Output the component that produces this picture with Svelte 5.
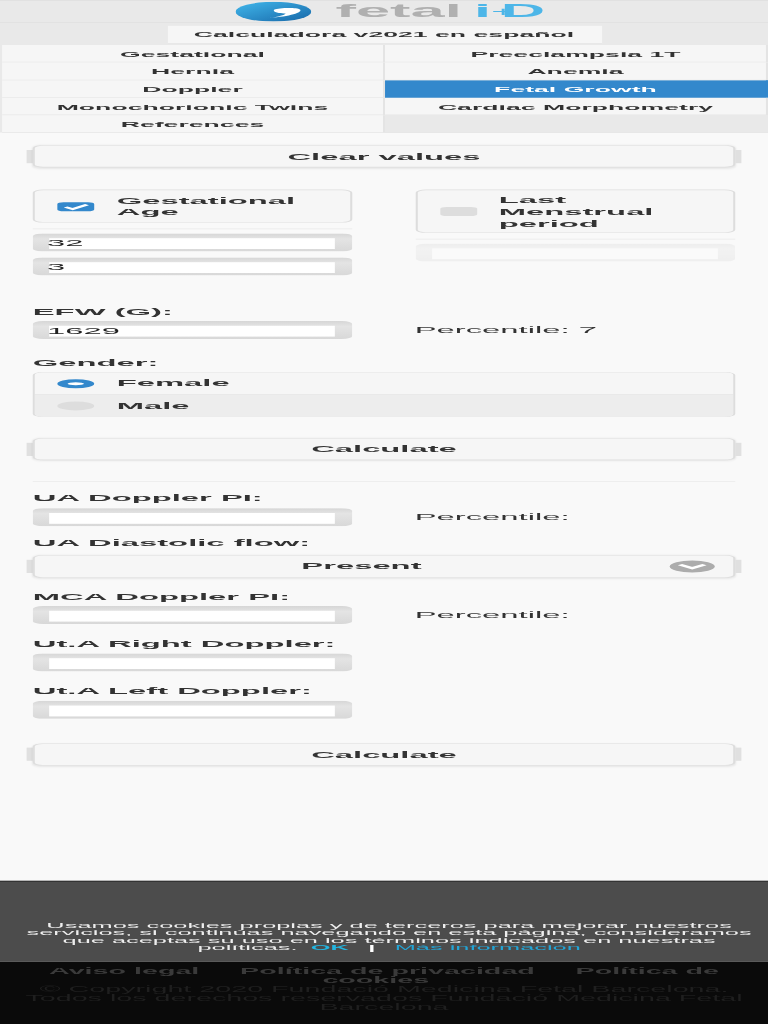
<script>
  // Tabs of the calculator
  const tabs = [
    { label: 'Gestational' },
    { label: 'Preeclampsia 1T' },
    { label: 'Hernia' },
    { label: 'Anemia' },
    { label: 'Doppler' },
    { label: 'Fetal Growth', active: true },
    { label: 'Monochorionic Twins' },
    { label: 'Cardiac Morphometry' },
    { label: 'References' },
    { label: '', empty: true },
  ]
</script>

<div class="viewport">
  <div class="page">
    <header class="header">
      <svg class="logo-mark" viewBox="0 0 37 33" aria-hidden="true">
        <defs>
          <linearGradient id="logoBlue" x1="0" y1="0" x2="1" y2="1">
            <stop offset="0" stop-color="#41b8ec" />
            <stop offset="1" stop-color="#1767a8" />
          </linearGradient>
        </defs>
        <ellipse cx="18.5" cy="16.5" rx="18.5" ry="16.5" fill="url(#logoBlue)" />
        <path d="M19 13c2-3 11-4 12.500 0 1.500 5-5 11.500-15 14 4.500-2 7.500-5 8-7.500-3 .5-7-2.500-5.500-6.500z" fill="#fff" />
      </svg>
      <div class="logo-text">
        <span class="logo-fetal">fetal</span>
        <span class="logo-id">i<span class="logo-plus">+</span>D</span>
      </div>
    </header>

    <div class="subtitle-bar">
      <div class="subtitle">Calculadora v2021 en español</div>
    </div>

    <nav class="tabs">
      {#each tabs as tab}
        <div class="tab" class:active={tab.active} class:empty={tab.empty}>{tab.label}</div>
      {/each}
    </nav>

    <main class="content">
      <div class="btn-wrap first">
        <div class="btn">Clear values</div>
      </div>

      <div class="two-col dates">
        <div>
          <div class="choice short">
            <span class="check on">
              <svg viewBox="0 0 18 15" aria-hidden="true"><path d="M4 8l3.500 3.500L14.500 4" fill="none" stroke="#fff" stroke-width="2.600" /></svg>
            </span>
            <span class="choice-text">Gestational Age</span>
          </div>
          <hr class="line" />
          <input class="input" value="32" />
          <input class="input next" value="3" />
        </div>
        <div>
          <div class="choice">
            <span class="check"></span>
            <span class="choice-text">Last Menstrual period</span>
          </div>
          <hr class="line" />
          <input class="input disabled" disabled />
        </div>
      </div>

      <div class="label efw">EFW (G):</div>
      <div class="two-col">
        <input class="input" value="1629" />
        <div class="percentile">Percentile: 7</div>
      </div>

      <div class="label gender">Gender:</div>
      <div class="radio-group">
        <div class="radio-row">
          <span class="radio on"></span>
          <span>Female</span>
        </div>
        <div class="radio-row off">
          <span class="radio"></span>
          <span>Male</span>
        </div>
      </div>

      <div class="btn-wrap calc">
        <div class="btn">Calculate</div>
      </div>

      <hr class="line wide" />

      <div class="label ua">UA Doppler PI:</div>
      <div class="two-col">
        <input class="input" />
        <div class="percentile">Percentile:</div>
      </div>

      <div class="label diastolic">UA Diastolic flow:</div>
      <div class="btn-wrap">
        <div class="btn select">
          <span class="select-text">Present</span>
          <span class="arrow">
            <svg viewBox="0 0 22 20" aria-hidden="true"><path d="M5 7l6 6 6-6" fill="none" stroke="#fff" stroke-width="3" /></svg>
          </span>
        </div>
      </div>

      <div class="label mca">MCA Doppler PI:</div>
      <div class="two-col">
        <input class="input" />
        <div class="percentile">Percentile:</div>
      </div>

      <div class="label uta">Ut.A Right Doppler:</div>
      <div class="two-col">
        <input class="input" />
      </div>

      <div class="label uta">Ut.A Left Doppler:</div>
      <div class="two-col">
        <input class="input" />
      </div>

      <div class="btn-wrap calc-last">
        <div class="btn">Calculate</div>
      </div>
    </main>

    <section class="cookies">
      Usamos cookies propias y de terceros para mejorar nuestros servicios, si continúas navegando en esta página, consideramos que aceptas su uso en los términos indicados en nuestras políticas.
      <b class="ok">OK</b> <span class="sep">|</span> <span class="more">Más información</span>
    </section>

    <footer class="footer">
      <div class="legal">
        <span>Aviso legal</span>
        <span>Política de privacidad</span>
        <span>Política de cookies</span>
      </div>
      <div class="copy">© Copyright 2020 Fundació Medicina Fetal Barcelona. Todos los derechos reservados Fundació Medicina Fetal Barcelona</div>
    </footer>
  </div>
</div>

<style>
  :global(body) {
    margin: 0;
    background: #f9f9f9;
  }

  /* The capture is a tall phone page squeezed into the window */
  .viewport {
    width: 768px;
    height: 1024px;
    overflow: hidden;
  }
  .page {
    display: flex;
    flex-direction: column;
    width: 375px;
    height: 1706.67px;
    transform: scale(2.048, 0.6);
    transform-origin: 0 0;
    font-family: "Liberation Sans", Arial, sans-serif;
    font-size: 16px;
    color: #333;
    background: #f9f9f9;
    filter: blur(0.3px);
  }

  /* Header */
  .header {
    display: flex;
    align-items: center;
    justify-content: center;
    gap: 12px;
    flex: none;
    height: 37px;
    padding-left: 6px;
    box-sizing: border-box;
    background: #e9e9e9;
    border-top: 1px solid #ddd;
  }
  .logo-mark {
    width: 37px;
    height: 33px;
  }
  .logo-text {
    display: flex;
    gap: 6px;
    font-size: 30px;
    line-height: 33px;
    font-weight: bold;
  }
  .logo-fetal {
    color: #b0b0b0;
  }
  .logo-id {
    color: #4db6e8;
  }
  .logo-plus {
    margin: 0 -7px 0 0;
    font-size: 20px;
    font-weight: normal;
    vertical-align: 3px;
  }
  .subtitle-bar {
    display: flex;
    justify-content: center;
    flex: none;
    height: 38px;
    padding-top: 5px;
    box-sizing: border-box;
    background: #e9e9e9;
    border-top: 1px solid #ddd;
  }
  .subtitle {
    width: 212px;
    height: 30px;
    line-height: 30px;
    text-align: center;
    font-size: 13px;
    font-weight: bold;
    background: #f6f6f6;
    border-bottom: 1px solid #e2e2e2;
    box-sizing: border-box;
  }

  /* Tabs */
  .tabs {
    display: grid;
    grid-template-columns: 1fr 1fr;
    grid-auto-rows: 29.300px;
    flex: none;
    padding-left: 1px;
    background: #e9e9e9;
    box-sizing: border-box;
  }
  .tab {
    line-height: 31px;
    text-align: center;
    font-size: 13px;
    font-weight: bold;
    background: #f6f6f6;
    border-right: 1px solid #e4e4e4;
    border-bottom: 1px solid #e4e4e4;
    box-sizing: border-box;
  }
  .tab.active {
    color: #fff;
    background: #3388cc;
    border-color: #3388cc;
  }
  .tab.empty {
    background: #e9e9e9;
    border-right: 0;
  }

  /* Form */
  .content {
    flex: 1;
    padding: 0 16px;
  }
  .two-col {
    display: grid;
    grid-template-columns: 156px 156px;
    column-gap: 30.500px;
    align-items: start;
  }
  .label {
    font-weight: bold;
    line-height: 19px;
    margin-bottom: 6px;
  }
  .label.efw { margin-top: 51px; }
  .label.gender { margin-top: 30px; }
  .label.ua { margin-top: 17px; margin-bottom: 8px; }
  .label.diastolic { margin-top: 18px; margin-bottom: 11px; }
  .label.mca { margin-top: 22px; }
  .label.uta { margin-top: 23px; margin-bottom: 7px; }

  .btn-wrap {
    display: flex;
    align-items: center;
    margin: 0 -3.400px;
  }
  .btn-wrap::before,
  .btn-wrap::after {
    content: '';
    flex: none;
    width: 3.400px;
    height: 22px;
    background: #e0e0e0;
  }
  .btn-wrap.first { margin-top: 21px; }
  .btn-wrap.calc { margin-top: 35px; }
  .btn-wrap.calc-last { margin-top: 41px; }
  .btn {
    flex: 1;
    height: 37px;
    line-height: 35px;
    text-align: center;
    font-weight: bold;
    background: #f6f6f6;
    border: 1px solid #ddd;
    border-radius: 5px;
    box-sizing: border-box;
    box-shadow: 0 1px 2px rgba(0, 0, 0, 0.08);
  }
  .select {
    display: flex;
    align-items: center;
    height: 38px;
    padding: 0 9px;
  }
  .select-text {
    flex: 1;
  }
  .arrow {
    display: flex;
    width: 22px;
    height: 20px;
    border-radius: 50%;
    background: #acacac;
  }

  .dates {
    margin-top: 37px;
  }
  .choice {
    display: flex;
    align-items: center;
    gap: 11px;
    height: 72px;
    padding: 1px 15px 0 11px;
    box-sizing: border-box;
    font-weight: bold;
    line-height: 19.500px;
    background: #f6f6f6;
    border: 1px solid #ddd;
    border-radius: 5px;
  }
  .choice.short {
    height: 55px;
  }
  .check {
    display: flex;
    flex: none;
    width: 18px;
    height: 15px;
    border-radius: 3px;
    background: #ddd;
  }
  .check.on {
    background: #3388cc;
  }
  .line {
    margin: 10px 0 7px;
    border: 0;
    border-top: 1px solid #e6e6e6;
  }
  .line.wide {
    margin: 34.500px 0 0;
  }
  .input {
    display: block;
    width: 100%;
    height: 30px;
    margin: 0;
    padding: 2px 0 0 7px;
    box-sizing: border-box;
    border: 0;
    border-radius: 5px;
    font: inherit;
    color: #222;
    background: linear-gradient(#fff, #fff) no-repeat 8.300px 8px / 139.500px 18px, linear-gradient(#d6d6d6, #e4e4e4 30%, #d8d8d8);
  }
  .input.next {
    margin-top: 10px;
  }
  .input.disabled {
    opacity: 0.3;
  }
  .percentile {
    line-height: 30px;
  }

  .radio-group {
    font-weight: bold;
    border: 1px solid #ddd;
    border-radius: 5px;
    overflow: hidden;
  }
  .radio-row {
    display: flex;
    align-items: center;
    gap: 11px;
    height: 36px;
    padding-left: 11px;
    background: #f6f6f6;
  }
  .radio-row.off {
    background: #ededed;
    border-top: 1px solid #e4e4e4;
  }
  .radio {
    width: 18px;
    height: 15px;
    border-radius: 50%;
    background: #ddd;
  }
  .radio.on {
    box-sizing: border-box;
    background: #fff;
    border: 5px solid #3388cc;
  }

  /* Cookie notice */
  .cookies {
    flex: none;
    height: 135px;
    padding: 67px 5.500px 0 10.500px;
    box-sizing: border-box;
    font-size: 12.400px;
    line-height: 12.200px;
    text-align: center;
    color: #eee;
    background: #4c4c4c;
    border-top: 2px solid #333;
  }
  .ok {
    margin: 0 3px 0 3px;
    color: #22b5e0;
  }
  .sep {
    margin: 0 3px;
    color: #fff;
    font-weight: bold;
  }
  .more {
    margin-left: 3px;
    color: #22a6d8;
  }

  /* Footer */
  .footer {
    flex: none;
    height: 104px;
    padding: 7px 8px 0;
    box-sizing: border-box;
    text-align: center;
    background: #0a0a0a;
  }
  .legal {
    font-size: 14px;
    line-height: 16px;
    font-weight: bold;
    color: #3a3a3a;
  }
  .legal span {
    margin: 0 8px;
  }
  .legal span:first-child {
    margin-left: 0;
  }
  .copy {
    font-size: 14px;
    line-height: 15.300px;
    color: #1f1f1f;
  }
</style>
